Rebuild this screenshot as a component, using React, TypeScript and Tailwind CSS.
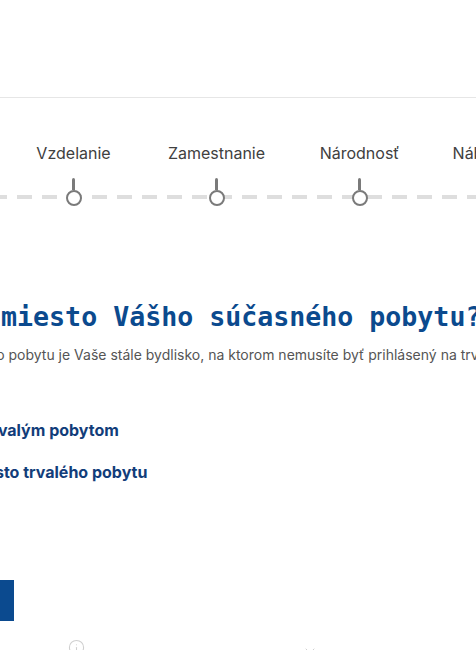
import { Info, ChevronDown } from 'lucide-react';

const steps = ['Bydlisko', 'Vzdelanie', 'Zamestnanie', 'Národnosť', 'Náboženstvo'];

function StepMarker() {
  return (
    <div className="flex flex-col items-center">
      <div className="w-[3px] h-[12px] bg-[#7a7a7a] rounded-t-sm" />
      <div className="w-[16px] h-[16px] rounded-full border-[2.5px] border-[#7a7a7a] bg-white" />
    </div>
  );
}

export default function App() {
  return (
    <div className="w-[476px] h-[650px] overflow-hidden bg-white font-['Inter','Noto_Sans',sans-serif]">
      <header className="h-[98px] border-b border-[#e6e6e6]" />

      {/* stepper */}
      <section className="relative mt-[43px]">
        <div className="absolute left-0 right-0 top-[54px] h-[4px] bg-[repeating-linear-gradient(90deg,#dedede_0_15px,transparent_15px_25px)] bg-[position:-8px_0]" />
        <div className="relative flex -ml-[141px]">
          {steps.map((s) => (
            <div key={s} className="w-[143px] shrink-0 flex flex-col items-center">
              <span className="text-[16px] leading-6 text-[#404040] whitespace-nowrap">{s}</span>
              <div className="mt-[13px]">
                <StepMarker />
              </div>
            </div>
          ))}
        </div>
      </section>

      {/* question */}
      <section className="mt-[95px]">
        <h1 className="-ml-[111px] whitespace-nowrap font-['DejaVu_Sans_Mono','Liberation_Mono',monospace] text-[26.6px] leading-8 font-bold text-[#0b4a8e]">
          Aké je miesto Vášho súčasného pobytu?
        </h1>
        <p className="-ml-[116px] mt-[12px] whitespace-nowrap text-[14px] leading-5 text-[#555]">
          Miesto súčasného pobytu je Vaše stále bydlisko, na ktorom nemusíte byť prihlásený na trvalý pobyt.
        </p>

        <div className="mt-[53px] flex flex-col gap-[18px] text-[16px] leading-6 font-bold text-[#123d7a] whitespace-nowrap">
          <label className="-ml-[29px]">S trvalým pobytom</label>
          <label className="-ml-[81px]">Mimo miesto trvalého pobytu</label>
        </div>
      </section>

      <div className="mt-[96px] flex">
        <button className="-ml-[106px] w-[120px] h-[41px] bg-[#0b4a8f] text-white text-[15px] font-semibold">
          Ďalej
        </button>
      </div>

      <div className="mt-[18px] flex text-[#cfcfcf]">
        <Info className="ml-[68px] w-[17px] h-[17px]" strokeWidth={1.5} />
        <ChevronDown className="ml-[217px] mt-[4px] w-[16px] h-[16px]" strokeWidth={1.5} />
      </div>
    </div>
  );
}
